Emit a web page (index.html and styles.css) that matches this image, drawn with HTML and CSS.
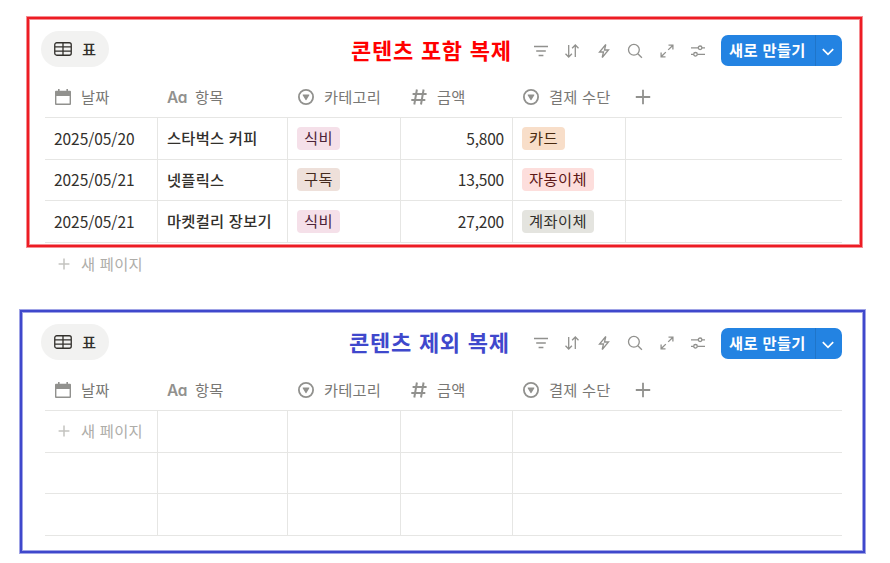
FILE: index.html
```
<!DOCTYPE html>
<html lang="ko">
<head>
<meta charset="utf-8">
<title>콘텐츠 복제</title>
<link rel="stylesheet" href="styles.css">
</head>
<body>
<svg class="sprite" aria-hidden="true">
  <symbol id="grid" viewBox="0 0 18 14"><rect x=".75" y=".75" width="16.5" height="12.5" rx="2"/><path d="M1 4.8h16M1 9.1h16M9 1v12"/></symbol>
  <symbol id="filter" viewBox="0 0 16 16"><path d="M1 3.5h14M3.2 8h9.6M5.6 12.5h4.8"/></symbol>
  <symbol id="sort" viewBox="0 0 16 16"><path d="M4.7 2v12M1.5 10.8 4.7 14l3.2-3.2M11.3 14V2M8.1 5.2 11.3 2l3.2 3.2"/></symbol>
  <symbol id="bolt" viewBox="0 0 16 16"><path d="M9.8 1.5 3.5 9h4L6.2 14.5 12.5 7h-4z"/></symbol>
  <symbol id="search" viewBox="0 0 16 16"><circle cx="6.9" cy="6.8" r="5.4"/><path d="m10.8 10.7 4.1 4.1"/></symbol>
  <symbol id="expand" viewBox="0 0 16 16"><path d="M9.5 2.2h4.4v4.4M13.9 2.2 9.2 6.9M6.5 13.8H2.1V9.4M2.1 13.8l4.7-4.7"/></symbol>
  <symbol id="sliders" viewBox="0 0 16 16"><path d="M1 4.8h7.2M12 4.8h3M1 11.3h2.6M7.4 11.3H15"/><circle cx="10.1" cy="4.8" r="1.8"/><circle cx="5.5" cy="11.3" r="1.8"/></symbol>
  <symbol id="chevron" viewBox="0 0 12 8"><path d="m.8 1.2 5.2 5.2 5.2-5.2"/></symbol>
  <symbol id="calendar" viewBox="0 0 16 16"><path fill="currentColor" stroke="none" fill-rule="evenodd" d="M3 0h1.6v1.8h6.8V0H13v1.8h2q1 0 1 1V15q0 1-1 1H1q-1 0-1-1V2.8q0-1 1-1h2zM1.4 7v7.5h13.2V7z"/></symbol>
  <symbol id="select" viewBox="0 0 16 16"><circle cx="8" cy="8" r="7.1"/><path fill="currentColor" stroke="none" d="M5 5.6h6q.6.1.3.7L8.4 11q-.4.5-.8 0L4.7 6.3q-.3-.6.3-.7"/></symbol>
  <symbol id="hash" viewBox="0 0 16 16"><path d="M5.9.5 3.3 15.5M12.6.5 10 15.5M1.6 5h14M.3 11h14"/></symbol>
  <symbol id="plus" viewBox="0 0 16 16"><path d="M8 .8v14.4M.8 8h14.4"/></symbol>
</svg>

<section class="frame frame-red">
  <header class="toolbar">
    <div class="tab"><svg class="tab-icon"><use href="#grid"/></svg><span>표</span></div>
    <h2 class="title">콘텐츠 포함 복제</h2>
    <div class="tools">
      <svg><use href="#filter"/></svg><svg><use href="#sort"/></svg><svg><use href="#bolt"/></svg><svg><use href="#search"/></svg><svg><use href="#expand"/></svg><svg><use href="#sliders"/></svg>
    </div>
    <div class="create"><span class="create-label">새로 만들기</span><span class="create-more"><svg><use href="#chevron"/></svg></span></div>
  </header>
  <div class="table">
    <div class="row head">
      <div><svg class="calendar"><use href="#calendar"/></svg>날짜</div>
      <div><span class="aa">Aa</span>항목</div>
      <div><svg><use href="#select"/></svg>카테고리</div>
      <div><svg class="hash"><use href="#hash"/></svg>금액</div>
      <div><svg><use href="#select"/></svg>결제 수단</div>
      <div><svg class="add"><use href="#plus"/></svg></div>
    </div>
    <div class="row">
      <div class="num">2025/05/20</div><div class="name">스타벅스 커피</div><div><span class="tag pink">식비</span></div><div class="num amount">5,800</div><div><span class="tag orange">카드</span></div><div></div>
    </div>
    <div class="row short">
      <div class="num">2025/05/21</div><div class="name">넷플릭스</div><div><span class="tag brown">구독</span></div><div class="num amount">13,500</div><div><span class="tag red">자동이체</span></div><div></div>
    </div>
    <div class="row">
      <div class="num">2025/05/21</div><div class="name">마켓컬리 장보기</div><div><span class="tag pink">식비</span></div><div class="num amount">27,200</div><div><span class="tag gray">계좌이체</span></div><div></div>
    </div>
  </div>
</section>
<div class="new-page outside"><svg><use href="#plus"/></svg>새 페이지</div>

<section class="frame frame-blue">
  <header class="toolbar">
    <div class="tab"><svg class="tab-icon"><use href="#grid"/></svg><span>표</span></div>
    <h2 class="title">콘텐츠 제외 복제</h2>
    <div class="tools">
      <svg><use href="#filter"/></svg><svg><use href="#sort"/></svg><svg><use href="#bolt"/></svg><svg><use href="#search"/></svg><svg><use href="#expand"/></svg><svg><use href="#sliders"/></svg>
    </div>
    <div class="create"><span class="create-label">새로 만들기</span><span class="create-more"><svg><use href="#chevron"/></svg></span></div>
  </header>
  <div class="table empty">
    <div class="row head">
      <div><svg class="calendar"><use href="#calendar"/></svg>날짜</div>
      <div><span class="aa">Aa</span>항목</div>
      <div><svg><use href="#select"/></svg>카테고리</div>
      <div><svg class="hash"><use href="#hash"/></svg>금액</div>
      <div><svg><use href="#select"/></svg>결제 수단</div>
      <div><svg class="add"><use href="#plus"/></svg></div>
    </div>
    <div class="row"><div class="new-page"><svg><use href="#plus"/></svg>새 페이지</div><div></div><div></div><div></div><div></div><div></div></div>
    <div class="row short"><div></div><div></div><div></div><div></div><div></div><div></div></div>
    <div class="row"><div></div><div></div><div></div><div></div><div></div><div></div></div>
  </div>
</section>
</body>
</html>
```

FILE: styles.css
```
* { box-sizing: border-box; }

body {
  margin: 0;
  padding-top: 16px;
  height: 563px;
  overflow: hidden;
  background: #fff;
  color: #32302c;
  font: 15.3px/20px "Noto Sans CJK KR", sans-serif;
}

.sprite { position: absolute; width: 0; height: 0; }

svg { flex: none; fill: none; stroke: currentColor; stroke-width: 1.3; }

.frame {
  border: 1px solid var(--edge);
  box-shadow: inset 0 0 0 2px var(--core), inset 0 0 0 3px var(--edge);
}

.frame-red {
  --core: #ed1c24;
  --edge: #f58d92;
  --title: #ff0000;
  width: 837px;
  height: 232px;
  margin-left: 26px;
  padding: 14px 20px 0 18px;
}

.frame-blue {
  --core: #3f48cc;
  --edge: #a0a4e6;
  --title: #3f48cc;
  width: 847px;
  height: 245px;
  margin-left: 19px;
  padding: 14px 23px 0 25px;
}

.toolbar { display: flex; height: 36px; margin-left: -4px; }
.tab {
  display: flex;
  align-items: center;
  gap: 10px;
  width: 68px;
  height: 36px;
  padding-left: 13px;
  border-radius: 18px;
  background: #f2f2f1;
  font-weight: 500;
}
.tab span { margin-top: -3px; }
.tab-icon { width: 18px; height: 14px; }
.title {
  width: 164px;
  margin: 2px 0 0 242px;
  color: var(--title);
  font-size: 22px;
  line-height: 32px;
  font-weight: 700;
  letter-spacing: .75px;
  white-space: nowrap;
}
.frame-blue .title { width: 166px; margin: 1px 0 0 240px; }
.tools {
  display: flex;
  gap: 15.4px;
  margin: 12px 0 0 18px;
  color: #91918e;
}
.tools svg { width: 16px; height: 16px; }
.create {
  display: flex;
  height: 31px;
  margin: 4px 0 0 auto;
  width: 121px;
  border-radius: 7px;
  background: #2383e2;
  color: #fff;
}
.frame-blue .tools { margin-top: 11px; }
.create-label { width: 94px; padding-left: 8px; line-height: 29px; font-weight: 700; letter-spacing: .35px; white-space: nowrap; }
.create-more { display: flex; align-items: center; justify-content: center; width: 27px; border-left: 1px solid #1f75c9; }
.create-more svg { width: 12px; height: 8px; margin: 2px 2px 0 0; stroke-width: 1.7; }

.table { padding-top: 9px; }
.row {
  display: grid;
  grid-template-columns: 113px 130px 113px 112px 113px 1fr;
  width: 797px;
  height: 42px;
  border-bottom: 1px solid #e6e6e4;
}
.row.short { height: 41px; }
.row > div {
  display: flex;
  align-items: center;
  padding: 0 9px 1px;
  border-right: 1px solid #e6e6e4;
  white-space: nowrap;
}
.row > div:last-child, .empty .row > div:nth-child(5) { border-right: 0; }
.row.head > div { padding: 0 0 1px 10px; border-color: transparent; color: #787774; letter-spacing: .2px; }
.head svg { width: 16px; height: 16px; margin: 1px 10px 0 0; color: #91918e; stroke-width: 1.8; }
.head .calendar { margin-top: 1px; }
.head .hash { margin: 2px 10px 0 0; stroke-width: 2; }
.head svg.add { margin: 2px 0 0 -1px; stroke-width: 1.8; }
.aa { width: 20px; margin: 4px 8px 0 -1px; color: #91918e; font: 600 15.5px/20px Inter, sans-serif; font-feature-settings: "cv11"; letter-spacing: -.3px; }
.row > .num { padding-bottom: 2px; font-size: 15.5px; letter-spacing: -.05px; }
.row > .amount { justify-content: flex-end; padding-right: 8px; letter-spacing: -.2px; }
.row > .name { padding-bottom: 3px; font-weight: 500; letter-spacing: .25px; }
.tag { height: 23px; padding: 0 7px; border-radius: 4px; line-height: 21px; letter-spacing: .45px; }
.pink { background: #f5e0e9; color: #4c2337; }
.brown { background: #eee0da; color: #442a1e; }
.orange { background: #f8dec9; color: #49290e; }
.red { background: #fddedc; color: #5d1715; }
.gray { background: #e4e4df; color: #32302c; }

.new-page { display: flex; align-items: center; color: #aeada9; letter-spacing: .25px; white-space: nowrap; }
.new-page svg { width: 12px; height: 12px; margin: 2px 11px 0 4px; stroke-width: 2; color: #c4c3c0; }
.row > .new-page { padding-bottom: 3px; }
.outside { height: 29px; margin-bottom: 32px; padding-left: 54px; }
```
